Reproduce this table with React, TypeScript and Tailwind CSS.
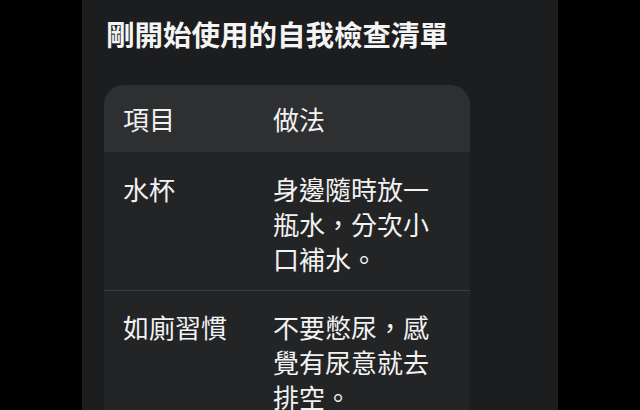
import React from "react";

const font = { fontFamily: '"Noto Sans CJK TC", "Noto Sans", sans-serif' };

const rows = [
  { item: "水杯", how: "身邊隨時放一瓶水，分次小口補水。" },
  { item: "如廁習慣", how: "不要憋尿，感覺有尿意就去排空。" },
];

export default function App() {
  return (
    <div className="w-full h-[410px] overflow-hidden bg-black flex justify-center" style={font}>
      <div className="w-[476px] h-full bg-[#1c1d1f] pl-[22px] pt-[14px]">
        <h1 className="pl-[2px] text-[28.5px] leading-[40px] font-bold text-[#f4f4f4] tracking-[0px]">
          剛開始使用的自我檢查清單
        </h1>
        <div className="mt-[31px] w-[366px] rounded-[20px] overflow-hidden bg-[#232426] text-[26px] leading-[35px] text-[#f2f2f2]">
          <div className="grid grid-cols-[150px_1fr] pl-[19px] pr-[20px] py-[16px] bg-[#2e2f31]">
            <div>項目</div>
            <div>做法</div>
          </div>
          {rows.map((r, i) => (
            <div
              key={i}
              className={
                i === 0
                  ? "grid grid-cols-[150px_1fr] pl-[19px] pr-[20px] pt-[19px] pb-[14px]"
                  : "grid grid-cols-[150px_1fr] pl-[19px] pr-[20px] pt-[18px] pb-[14px] border-t border-[#3a3b3d]"
              }
            >
              <div>{r.item}</div>
              <div>{r.how}</div>
            </div>
          ))}
        </div>
      </div>
    </div>
  );
}
